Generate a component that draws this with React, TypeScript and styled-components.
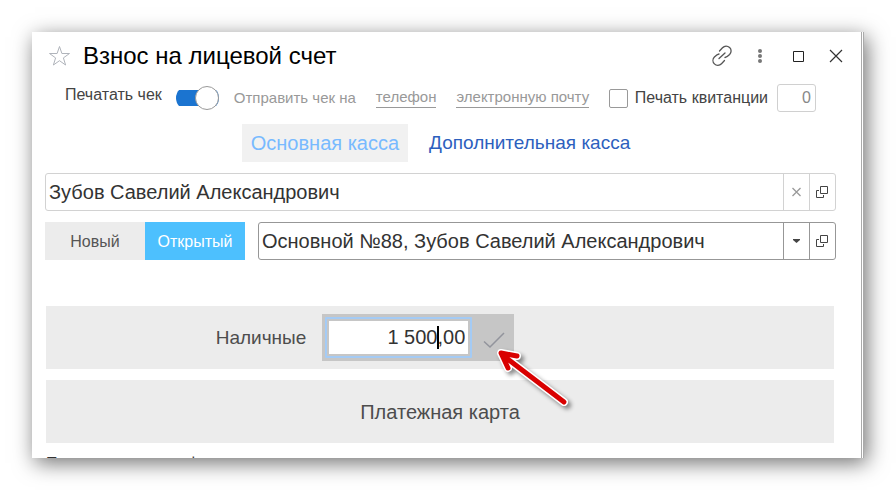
import React, { useState } from "react";
import styled, { createGlobalStyle, css } from "styled-components";

const GlobalStyle = createGlobalStyle`
  *, *::before, *::after { box-sizing: border-box; }
  body {
    margin: 0;
    background: #fff;
    font-family: "Liberation Sans", Arial, sans-serif;
    font-size: 16px;
    color: #333;
  }
  button, input, select { font: inherit; color: inherit; margin: 0; }
  button { border: 0; padding: 0; background: none; cursor: pointer; }
  svg { display: block; }
`;

const Window = styled.main`
  margin: 32px;
  padding: 0 25px 0 13px;
  background: #fff;
  border-right: 3px double #aaa;
  box-shadow: 3px 5px 20px rgba(0, 0, 0, 0.56);
`;

const Header = styled.header`
  display: flex;
  align-items: center;
  height: 48px;
  padding: 0 0 0 3px;
`;

const Title = styled.h1`
  flex: 1;
  margin: 0 0 0 11px;
  font-size: 24px;
  line-height: 28px;
  font-weight: 400;
  color: #000;
`;

const Tools = styled.div`
  display: flex;
  align-items: center;
  gap: 14px;
  margin-right: -12px;
`;

const IconButton = styled.button`
  display: grid;
  place-items: center;
  width: 24px;
  height: 24px;
`;

const Options = styled.div`
  display: flex;
  align-items: center;
  height: 36px;
  padding: 0 20px;
  white-space: nowrap;
`;

const OptionLabel = styled.label<{ $raised?: boolean }>`
  line-height: 20px;
  color: #444;
  ${(p) => p.$raised && css`align-self: flex-start; padding-top: 5px;`}
`;

const Toggle = styled.input`
  appearance: none;
  display: flex;
  align-items: center;
  justify-content: flex-end;
  width: 43px;
  height: 24px;
  margin-left: 14px;
  background: linear-gradient(#1b74d0, #1b74d0) center / 100% 16px no-repeat;
  border-radius: 12px;
  cursor: pointer;
  &::before {
    content: "";
    width: 24px;
    height: 24px;
    border: 1px solid #999;
    border-radius: 50%;
    background: #fff;
  }
  &:not(:checked) { justify-content: flex-start; }
`;

const SendTo = styled.div`
  display: flex;
  gap: 20px;
  flex: 1;
  margin-left: 15px;
  font-size: 15px;
  line-height: 20px;
  color: #999;
`;

const SendLink = styled.a`
  line-height: 18px;
  color: #999;
  text-decoration: none;
  border-bottom: 1px solid #999;
`;

const Tick = styled.input`
  appearance: none;
  width: 19px;
  height: 19px;
  margin-right: 7px;
  border: 1px solid #999;
  border-radius: 2px;
  background: #fff;
  &:checked { background: #1b74d0; }
`;

const Copies = styled.input`
  width: 39px;
  height: 28px;
  margin-left: 9px;
  padding: 0 4px;
  border: 1px solid #d0d0d0;
  border-radius: 3px;
  text-align: right;
  color: #888;
  background: #fff;
`;

const Tabs = styled.nav`
  display: flex;
  justify-content: center;
  gap: 12px;
  margin: 8px 0 11px;
`;

const Tab = styled.button<{ $active?: boolean }>`
  height: 38px;
  padding: 0 9px;
  font-size: ${(p) => (p.$active ? "20px" : "19px")};
  color: ${(p) => (p.$active ? "#78baff" : "#2d5fbe")};
  background: ${(p) => (p.$active ? "#f1f1f1" : "transparent")};
`;

const Field = styled.div<{ $strong?: boolean }>`
  --line: ${(p) => (p.$strong ? "#979797" : "#d2d2d2")};
  display: grid;
  grid-template-columns: 1fr 26px 26px;
  flex: 1;
  height: 38px;
  border: 1px solid var(--line);
  border-radius: 3px;
`;

const FieldText = styled.input`
  min-width: 0;
  padding: 0 3px;
  border: 0;
  background: none;
  font-size: 20px;
`;

const FieldSelect = styled.select`
  appearance: none;
  grid-column: 1 / 3;
  grid-row: 1;
  min-width: 0;
  padding: 0 30px 0 3px;
  border: 0;
  background: none;
  font-size: 20px;
`;

const FieldButton = styled.button`
  display: grid;
  place-items: center;
  border-left: 1px solid var(--line);
`;

const SelectArrow = styled.span`
  grid-column: 2;
  grid-row: 1;
  display: grid;
  place-items: center;
  border-left: 1px solid var(--line);
  pointer-events: none;
`;

const AccountRow = styled.div`
  display: flex;
  gap: 13px;
  margin: 11px 0 46px;
`;

const Segments = styled.div`
  display: flex;
`;

const Segment = styled.button<{ $active?: boolean }>`
  width: 100px;
  height: 38px;
  padding-top: 2px;
  color: ${(p) => (p.$active ? "#fff" : "#555")};
  background: ${(p) => (p.$active ? "#4dc0fe" : "#ececec")};
`;

const Payments = styled.section`
  display: grid;
  gap: 11px;
  margin: 0 2px 0 1px;
`;

const CashPanel = styled.div`
  display: flex;
  align-items: center;
  justify-content: center;
  gap: 16px;
  height: 63px;
  padding-right: 150px;
  background: #ececec;
  font-size: 19px;
  color: #4d4d4d;
`;

const CardButton = styled.button`
  height: 63px;
  padding-top: 2px;
  background: #ececec;
  font-size: 20px;
  color: #4d4d4d;
`;

const AmountBox = styled.div`
  position: relative;
  display: flex;
  align-items: center;
  gap: 5px;
  height: 47px;
  width: 192px;
  padding: 0 3px;
  background: #c6c6c6;
`;

const AmountInput = styled.input`
  width: 147px;
  height: 41px;
  padding: 0 5px;
  border: 2px solid #a4cbf5;
  outline: 2px solid #c6c6c6;
  outline-offset: -4px;
  background: #fff;
  text-align: right;
  font-size: 20px;
  color: #333;
  border-radius: 1px;
`;

const Caret = styled.span`
  position: absolute;
  right: 75px;
  top: 12px;
  width: 2px;
  height: 23px;
  background: #000;
`;

const Pointer = styled.svg`
  position: absolute;
  left: 20px;
  top: 35px;
  overflow: visible;
  filter: drop-shadow(3px 3px 2px rgba(0, 0, 0, 0.45));
  pointer-events: none;
  z-index: 1;
`;

const ConfirmSlot = styled.div`
  position: relative;
`;

const ConfirmButton = styled(IconButton)`
  width: 34px;
  height: 41px;
  padding-top: 5px;
`;

const Footer = styled.p`
  height: 15px;
  margin: 0;
  padding: 11px 0 0 1px;
  line-height: 20px;
  overflow: hidden;
`;

function OpenIcon() {
  return (
    <svg width="13" height="12" fill="none" stroke="#444" aria-hidden="true">
      <path d="M4.5.5h7v7h-7zM3 4.500H.5v7h7V9" />
    </svg>
  );
}

export default function App() {
  const [printReceipt, setPrintReceipt] = useState(true);
  const [printSlip, setPrintSlip] = useState(false);
  const [person, setPerson] = useState("Зубов Савелий Александрович");
  const [amount, setAmount] = useState("1 500,00");
  const [copies, setCopies] = useState("0");

  return (
    <>
      <GlobalStyle />
      <Window>
        <Header>
          <IconButton aria-label="Добавить в избранное">
            <svg width="24" height="24" fill="none" stroke="#b0b4bb" aria-hidden="true">
              <path d="M11.5 2.5l2.4 7h7.6l-6.1 4.4 2.2 7.1-6.1-4.3L5.4 21l2.2-7.1-6.1-4.4h7.6z" />
            </svg>
          </IconButton>
          <Title>Взнос на лицевой счет</Title>
          <Tools>
            <IconButton aria-label="Получить ссылку">
              <svg width="24" height="24" fill="none" stroke="#555" strokeWidth="1.3" strokeLinecap="round" aria-hidden="true">
                <path d="M9 14.500l6-5.500M9.500 7l3-3.200C14.500 1.700 17.500 1.700 19.600 3.600s1.900 4.900 0 6.900c-1.500 1.500-3 2.800-4.600 3M9 10c-1.600.2-3 1.400-4.600 3-1.900 2-1.900 5 0 6.900s5.100 1.900 7.100-.2l3-3.200" />
              </svg>
            </IconButton>
            <IconButton aria-label="Ещё">
              <svg width="24" height="24" fill="#777" aria-hidden="true">
                <circle cx="12" cy="7" r="2" />
                <circle cx="12" cy="12" r="2" />
                <circle cx="12" cy="17" r="2" />
              </svg>
            </IconButton>
            <IconButton aria-label="Развернуть">
              <svg width="24" height="24" fill="none" stroke="#222" aria-hidden="true">
                <path d="M7.5 7.5h10v10h-10z" />
              </svg>
            </IconButton>
            <IconButton aria-label="Закрыть">
              <svg width="24" height="24" fill="none" stroke="#333" strokeWidth="1.2" aria-hidden="true">
                <path d="M6 6l12 12M18 6L6 18" />
              </svg>
            </IconButton>
          </Tools>
        </Header>

        <Options>
          <OptionLabel htmlFor="receipt" $raised>Печатать чек</OptionLabel>
          <Toggle
            id="receipt"
            type="checkbox"
            role="switch"
            checked={printReceipt}
            onChange={(e) => setPrintReceipt(e.target.checked)}
          />
          <SendTo>
            <span>Отправить чек на</span>
            <SendLink href="#phone">телефон</SendLink>
            <SendLink href="#email">электронную почту</SendLink>
          </SendTo>
          <Tick
            id="slip"
            type="checkbox"
            checked={printSlip}
            onChange={(e) => setPrintSlip(e.target.checked)}
          />
          <OptionLabel htmlFor="slip">Печать квитанции</OptionLabel>
          <Copies
            aria-label="Количество квитанций"
            value={copies}
            onChange={(e) => setCopies(e.target.value)}
          />
        </Options>

        <Tabs>
          <Tab $active>Основная касса</Tab>
          <Tab>Дополнительная касса</Tab>
        </Tabs>

        <Field>
          <FieldText
            aria-label="Клиент"
            value={person}
            onChange={(e) => setPerson(e.target.value)}
          />
          <FieldButton aria-label="Очистить" onClick={() => setPerson("")}>
            <svg width="9" height="10" fill="none" stroke="#999" strokeWidth="1.3" aria-hidden="true">
              <path d="M.5 1l8 8M8.5 1l-8 8" />
            </svg>
          </FieldButton>
          <FieldButton aria-label="Открыть клиента"><OpenIcon /></FieldButton>
        </Field>

        <AccountRow>
          <Segments>
            <Segment>Новый</Segment>
            <Segment $active>Открытый</Segment>
          </Segments>
          <Field $strong>
            <FieldSelect aria-label="Лицевой счет">
              <option>Основной №88, Зубов Савелий Александрович</option>
            </FieldSelect>
            <SelectArrow>
              <svg width="7" height="4" fill="#444" aria-hidden="true"><path d="M0 0h7v1L3.500 4 0 1z" /></svg>
            </SelectArrow>
            <FieldButton aria-label="Открыть счет"><OpenIcon /></FieldButton>
          </Field>
        </AccountRow>

        <Payments>
          <CashPanel>
            <label htmlFor="cash">Наличные</label>
            <AmountBox>
              <AmountInput id="cash" value={amount} onChange={(e) => setAmount(e.target.value)} />
              <Caret />
              <ConfirmSlot>
                <ConfirmButton aria-label="Подтвердить">
                  <svg width="22" height="17" fill="none" stroke="#92949c" strokeWidth="1.5" aria-hidden="true">
                    <path d="M1 9.5L7 15 21 1" />
                  </svg>
                </ConfirmButton>
                <Pointer width="70" height="56" aria-hidden="true">
                  <g fill="none" strokeLinecap="round" strokeLinejoin="round">
                    <path d="M67 50L8 5M20 4L4 1L11 16" stroke="#fff" strokeWidth="8" />
                    <path d="M67 50L8 5M20 4L4 1L11 16" stroke="#d90000" strokeWidth="5" />
                  </g>
                </Pointer>
              </ConfirmSlot>
            </AmountBox>
          </CashPanel>
          <CardButton>Платежная карта</CardButton>
        </Payments>

        <Footer>Пополнение счета физ. лица</Footer>
      </Window>
    </>
  );
}
